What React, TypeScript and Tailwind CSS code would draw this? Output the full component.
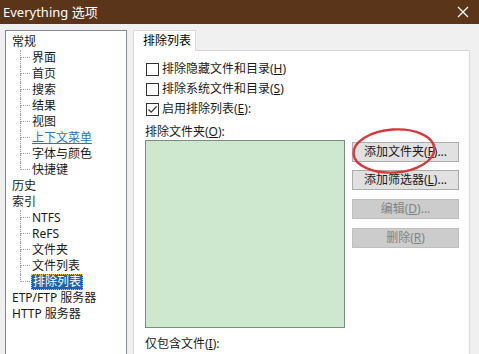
import React from "react";

type Node = {
  label: React.ReactNode;
  children?: { label: React.ReactNode; selected?: boolean; link?: boolean }[];
};

const tree: Node[] = [
  {
    label: "常规",
    children: [
      { label: "界面" },
      { label: "首页" },
      { label: "搜索" },
      { label: "结果" },
      { label: "视图" },
      { label: "上下文菜单", link: true },
      { label: "字体与颜色" },
      { label: "快捷键" },
    ],
  },
  { label: "历史" },
  {
    label: "索引",
    children: [
      { label: "NTFS" },
      { label: "ReFS" },
      { label: "文件夹" },
      { label: "文件列表" },
      { label: "排除列表", selected: true },
    ],
  },
  { label: "ETP/FTP 服务器" },
  { label: "HTTP 服务器" },
];

function Connector({ last }: { last: boolean }) {
  return (
    <div className="ml-[14px] flex h-[16px] w-[10px] flex-col">
      <div className="h-[8px] border-b border-l border-dotted border-[#a0a0a0]" />
      {!last && <div className="h-[8px] border-l border-dotted border-[#a0a0a0]" />}
    </div>
  );
}

function Tree() {
  return (
    <div className="h-[340px] w-[122px] border border-[#828790] bg-white pt-[3px] pl-[6px] text-[#1a1a1a]">
      {tree.map((n, i) => (
        <div key={i}>
          <div className="flex h-[16px] items-center">{n.label}</div>
          {n.children?.map((c, j) => (
            <div key={j} className="-ml-[6px] flex h-[16px] items-center">
              <Connector last={j === n.children!.length - 1} />
              {c.selected ? (
                <span className="ml-[1px] border border-dotted border-[#e0c060] bg-[#1b63b0] px-[1px] leading-[14px] text-white">
                  {c.label}
                </span>
              ) : (
                <span className={`ml-[2px] ${c.link ? "text-[#2a74c0] underline" : ""}`}>{c.label}</span>
              )}
            </div>
          ))}
        </div>
      ))}
    </div>
  );
}

function Check({ checked, children }: { checked?: boolean; children: React.ReactNode }) {
  return (
    <div className="flex h-[20px] items-center">
      <div className="flex h-[13px] w-[13px] items-center justify-center border border-[#333333] bg-white">
        {checked && (
          <svg width="11" height="11" viewBox="0 0 11 11">
            <polyline points="1.5,5.5 4.2,8.2 9.5,2.5" fill="none" stroke="#333" strokeWidth="1.2" />
          </svg>
        )}
      </div>
      <span className="ml-[3px]">{children}</span>
    </div>
  );
}

function Btn({ children, disabled }: { children: React.ReactNode; disabled?: boolean }) {
  return (
    <div
      className={`flex h-[20px] w-[107px] items-center justify-center border ${
        disabled ? "border-[#bfbfbf] bg-[#cccccc] text-[#838383]" : "border-[#adadad] bg-[#e1e1e1] text-[#1a1a1a]"
      }`}
    >
      {children}
    </div>
  );
}

const U = ({ c }: { c: string }) => <span className="underline">{c}</span>;

export default function App() {
  return (
    <div
      className="h-[354px] w-[479px] overflow-hidden bg-[#f0f0f0] text-[12px] leading-[16px]"
      style={{ fontFamily: '"Noto Sans", "Noto Sans CJK SC", sans-serif' }}
    >
      <div className="flex h-[24px] items-center justify-between bg-[#5a3519] pl-[3px] pr-[10px] text-white">
        <span className="text-[13px]">Everything 选项</span>
        <svg width="12" height="12" viewBox="0 0 12 12">
          <path d="M1 1 L11 11 M11 1 L1 11" stroke="#fff" strokeWidth="1.3" />
        </svg>
      </div>

      <div className="flex pl-[5px] pt-[6px]">
        <Tree />

        <div className="ml-[6px] flex flex-col">
          <div className="relative z-10 -mb-[1px] flex h-[21px] w-[63px] items-center border-x border-t border-[#d9d9d9] bg-white pl-[9px]">
            排除列表
          </div>
          <div className="h-[320px] w-[337px] border border-[#d9d9d9] bg-white pl-[12px] pt-[8px] text-[#1a1a1a]">
            <Check>
              排除隐藏文件和目录(<U c="H" />)
            </Check>
            <Check>
              排除系统文件和目录(<U c="S" />)
            </Check>
            <Check checked>
              启用排除列表(<U c="E" />):
            </Check>

            <div className="mt-[5px] -ml-[1px] flex h-[16px] items-center">
              排除文件夹(<U c="O" />):
            </div>

            <div className="-ml-[1px] flex">
              <div className="h-[188px] w-[200px] border border-[#7d8c7d] bg-[#cde8cf]" />
              <div className="relative ml-[7px] mt-[2px] flex flex-col gap-[8px]">
                <Btn>
                  添加文件夹(<U c="F" />)...
                </Btn>
                <Btn>
                  添加筛选器(<U c="L" />)...
                </Btn>
                <div className="mt-[1px]">
                  <Btn disabled>
                    编辑(<U c="D" />)...
                  </Btn>
                </div>
                <div className="mt-[1px]">
                  <Btn disabled>
                    删除(<U c="R" />)
                  </Btn>
                </div>
                <svg
                  className="pointer-events-none absolute left-[-1px] top-[-15px]"
                  width="88"
                  height="50"
                  viewBox="0 0 88 50"
                >
                  <ellipse
                    cx="43"
                    cy="24"
                    rx="40.5"
                    ry="21.5"
                    fill="none"
                    stroke="#d8383c"
                    strokeWidth="2.4"
                    transform="rotate(-4 43 24)"
                  />
                </svg>
              </div>
            </div>

            <div className="mt-[8px] -ml-[1px] flex h-[16px] items-center">
              仅包含文件(<U c="I" />):
            </div>
          </div>
        </div>
      </div>
    </div>
  );
}
